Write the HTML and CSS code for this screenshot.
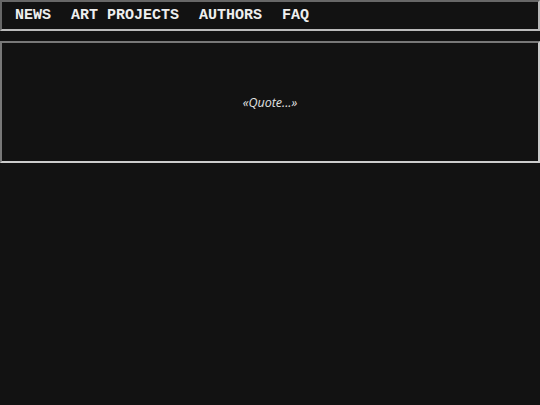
FILE: index.html
```html
<!DOCTYPE html>
<html>
<head>
<meta charset="utf-8">
<link rel="stylesheet" href="styles.css">
</head>
<body>
<nav class="nav">
  <a class="nav-item" href="#">NEWS</a>
  <a class="nav-item" href="#">ART PROJECTS</a>
  <a class="nav-item" href="#">AUTHORS</a>
  <a class="nav-item" href="#">FAQ</a>
</nav>
<section class="quote-box">
  <p class="quote">«Quote...»</p>
</section>
</body>
</html>
```
FILE: styles.css
```css
html, body {
  margin: 0;
  padding: 0;
  background: #121212;
}
body {
  height: 405px;
}
.nav {
  display: flex;
  align-items: center;
  height: 27px;
  padding: 0 3px;
  border: 2px inset #bbb;
  background: #121212;
}
.nav-item {
  font-family: "Courier New", "Nimbus Mono PS", "FreeMono", "Liberation Mono", monospace;
  font-weight: bold;
  font-size: 15px;
  color: #eeeeee;
  text-decoration: none;
  padding: 0 10px;
}
.quote-box {
  margin-top: 10px;
  height: 118px;
  border: 2px inset #ccc;
  display: flex;
  align-items: center;
  justify-content: center;
}
.quote {
  margin: 0;
  font-family: "Open Sans", sans-serif;
  font-style: italic;
  font-size: 12.5px;
  color: #e2e2e2;
}
```
